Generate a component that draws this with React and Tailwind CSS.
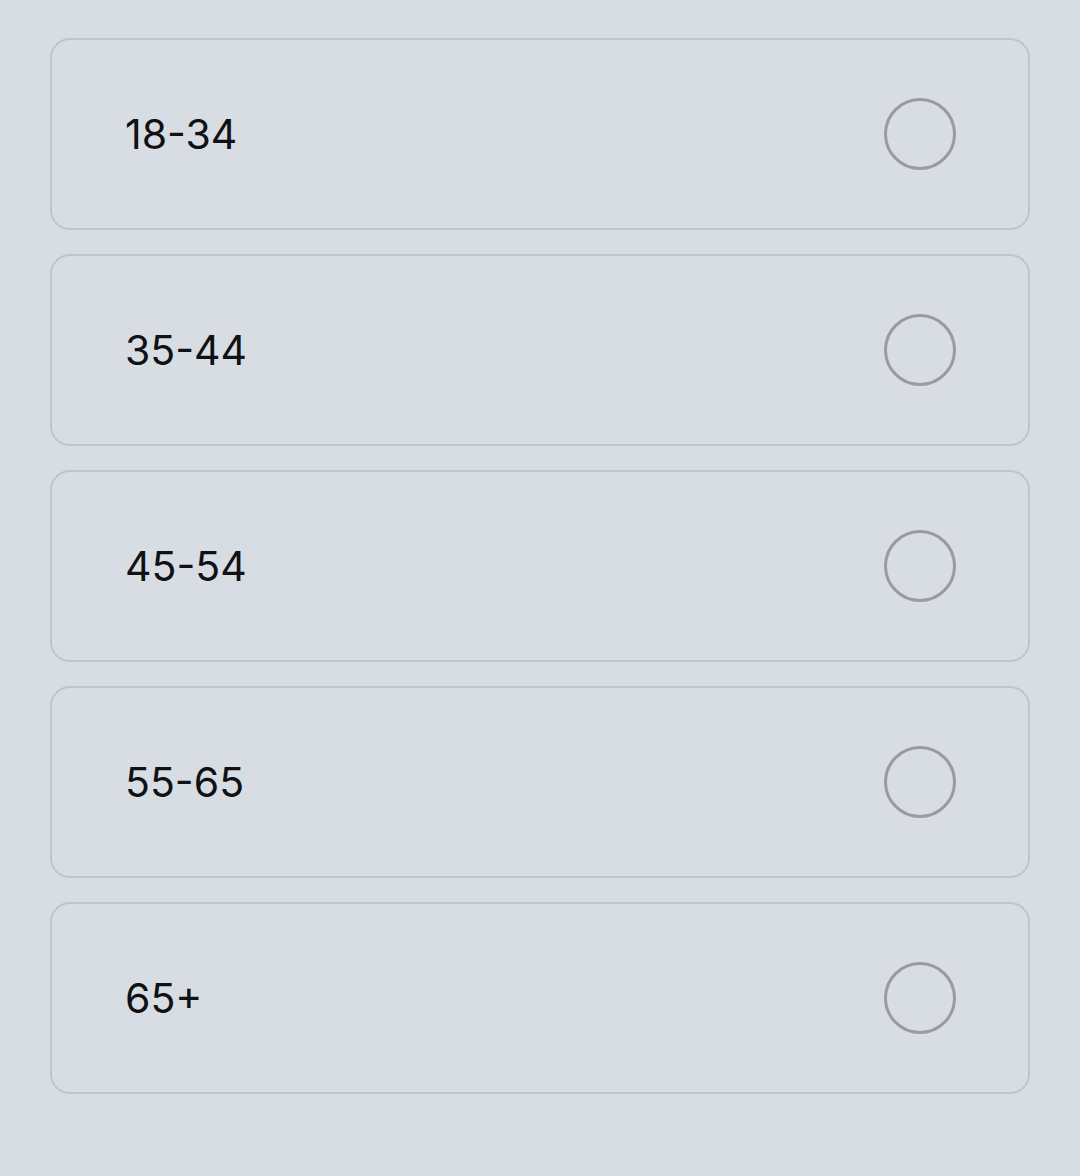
import React from 'react';

const OPTIONS = ['18-34', '35-44', '45-54', '55-65', '65+'];

export default function App() {
  return (
    <div className="min-h-[1176px] bg-[#d8dde3] px-[50px] pt-[38px] pb-[80px]" style={{ fontFamily: 'Inter, "Noto Sans", sans-serif' }}>
      <div className="flex flex-col gap-[24px]">
        {OPTIONS.map(opt => (
          <label
            key={opt}
            className="flex items-center justify-between h-[192px] pl-[73px] pr-[72px] rounded-[20px] border-2 border-[#c0c5cb] bg-[#d8dde3]"
          >
            <span className="text-[41px] leading-none text-[#0f1114]">{opt}</span>
            <span className="w-[72px] h-[72px] rounded-full border-[3px] border-[#9a9b9c]" />
          </label>
        ))}
      </div>
    </div>
  );
}
